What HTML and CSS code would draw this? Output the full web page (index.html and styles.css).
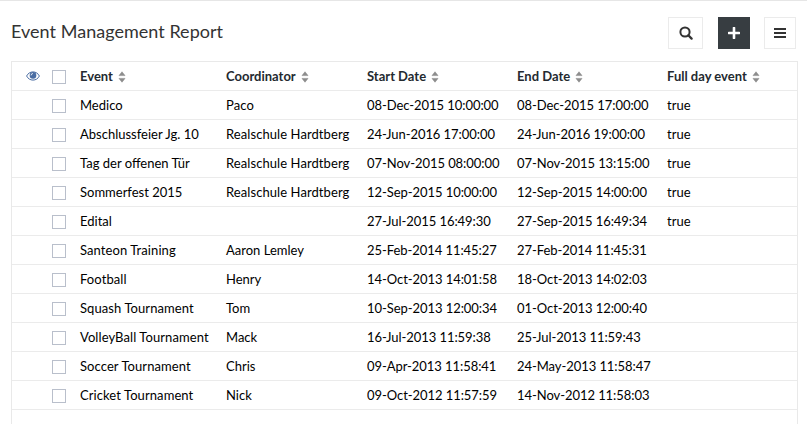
FILE: index.html
```html
<!DOCTYPE html>
<html lang="en">
<head>
<meta charset="utf-8">
<title>Event Management Report</title>
<link rel="stylesheet" href="styles.css">
</head>
<body>
<svg width="0" height="0" class="defs"><symbol id="sort" viewBox="0 0 8 12"><path d="M1 4.6h6L4 .8zM1 7.4h6L4 11.2z" fill="#8d8d8d" stroke="#8d8d8d" stroke-width=".6" stroke-linejoin="round"/></symbol></svg>
<header class="bar">
  <h1>Event Management Report</h1>
  <div class="actions">
    <button class="btn wide" aria-label="Search"><svg width="14" height="14" viewBox="0 0 14 14"><circle cx="6" cy="6" r="4.6" fill="none" stroke="#333" stroke-width="2"/><path d="M9.3 9.3l3.3 3.3" stroke="#333" stroke-width="2.3" stroke-linecap="round"/></svg></button>
    <button class="btn dark" aria-label="Add"><svg width="12" height="12" viewBox="0 0 12 12"><path d="M6 .9v10.2M.9 6h10.2" stroke="#fff" stroke-width="2.6" stroke-linecap="round"/></svg></button>
    <button class="btn" aria-label="Menu"><svg width="12" height="10" viewBox="0 0 12 10"><path d="M0 1h12M0 5h12M0 9h12" stroke="#333" stroke-width="2"/></svg></button>
  </div>
</header>
<main class="table" id="table">
  <div class="row head">
    <span class="eye"><svg width="14" height="10" viewBox="0 0 14 10"><path d="M.6 5C2 2.3 4.3.9 7 .9S12 2.3 13.4 5C12 7.7 9.7 9.1 7 9.1S2 7.7.6 5z" fill="#fff" stroke="#4a6da3" stroke-width="1"/><circle cx="7" cy="4.4" r="3.3" fill="#4a6da3"/><path d="M5.1 4.4A1.9 1.9 0 0 1 7 2.5" fill="none" stroke="#fff" stroke-width=".8"/></svg></span><i class="box"></i>
    <span>Event<svg class="sort"><use href="#sort"/></svg></span>
    <span>Coordinator<svg class="sort"><use href="#sort"/></svg></span>
    <span>Start Date<svg class="sort"><use href="#sort"/></svg></span>
    <span>End Date<svg class="sort"><use href="#sort"/></svg></span>
    <span>Full day event<svg class="sort"><use href="#sort"/></svg></span>
  </div>
  <div class="row"><span></span><i class="box"></i><span>Medico</span><span class="name">Paco</span><span class="date">08-Dec-2015 10:00:00</span><span class="date">08-Dec-2015 17:00:00</span><span>true</span></div>
  <div class="row"><span></span><i class="box"></i><span>Abschlussfeier Jg. 10</span><span class="name">Realschule Hardtberg</span><span class="date">24-Jun-2016 17:00:00</span><span class="date">24-Jun-2016 19:00:00</span><span>true</span></div>
  <div class="row"><span></span><i class="box"></i><span>Tag der offenen Tür</span><span class="name">Realschule Hardtberg</span><span class="date">07-Nov-2015 08:00:00</span><span class="date">07-Nov-2015 13:15:00</span><span>true</span></div>
  <div class="row"><span></span><i class="box"></i><span>Sommerfest 2015</span><span class="name">Realschule Hardtberg</span><span class="date">12-Sep-2015 10:00:00</span><span class="date">12-Sep-2015 14:00:00</span><span>true</span></div>
  <div class="row"><span></span><i class="box"></i><span>Edital</span><span class="name"></span><span class="date">27-Jul-2015 16:49:30</span><span class="date">27-Sep-2015 16:49:34</span><span>true</span></div>
  <div class="row"><span></span><i class="box"></i><span class="name">Santeon Training</span><span>Aaron Lemley</span><span class="date">25-Feb-2014 11:45:27</span><span class="date">27-Feb-2014 11:45:31</span><span></span></div>
  <div class="row"><span></span><i class="box"></i><span class="name">Football</span><span>Henry</span><span class="date">14-Oct-2013 14:01:58</span><span class="date">18-Oct-2013 14:02:03</span><span></span></div>
  <div class="row"><span></span><i class="box"></i><span class="name">Squash Tournament</span><span>Tom</span><span class="date">10-Sep-2013 12:00:34</span><span class="date">01-Oct-2013 12:00:40</span><span></span></div>
  <div class="row"><span></span><i class="box"></i><span class="name">VolleyBall Tournament</span><span>Mack</span><span class="date">16-Jul-2013 11:59:38</span><span class="date">25-Jul-2013 11:59:43</span><span></span></div>
  <div class="row"><span></span><i class="box"></i><span class="name">Soccer Tournament</span><span>Chris</span><span class="date">09-Apr-2013 11:58:41</span><span class="date">24-May-2013 11:58:47</span><span></span></div>
  <div class="row"><span></span><i class="box"></i><span class="name">Cricket Tournament</span><span>Nick</span><span class="date">09-Oct-2012 11:57:59</span><span class="date">14-Nov-2012 11:58:03</span><span></span></div>
</main>
</body>
</html>
```
FILE: styles.css
```css
* { box-sizing: border-box; }
body {
  margin: 0;
  height: 424px;
  overflow: hidden;
  display: flex;
  flex-direction: column;
  background: #fff;
  border-top: 1px solid #e6e6e6;
  font: 13px/28px Lato, sans-serif;
  color: #000;
}
.defs { position: absolute; }
.bar {
  height: 60px;
  flex: none;
  display: flex;
  justify-content: space-between;
  align-items: flex-start;
  padding: 16px 11px 0;
}
h1 {
  margin: 0;
  font-size: 18px;
  font-weight: 400;
  line-height: 29px;
  letter-spacing: .03px;
  color: #333;
}
.actions { display: flex; gap: 14px; }
.btn {
  width: 32px;
  height: 32px;
  padding: 0;
  display: flex;
  align-items: center;
  justify-content: center;
  background: #fff;
  border: 1px solid #ebebeb;
}
.wide { width: 35px; margin-right: 1px; }
.dark { background: #373d41; border-color: #373d41; }
.table {
  flex: 1;
  margin: 0 9px 0 11px;
  border: 1px solid #e9e9e9;
  border-bottom: 0;
}
.row {
  display: grid;
  grid-template-columns: 40px 28px 146px 141px 150px 150px 1fr;
  align-items: center;
  height: 29px;
  border-bottom: 1px solid #ebebeb;
  white-space: nowrap;
}
.head { font-weight: 700; color: #242a30; }
.name { letter-spacing: .08px; }
.date { letter-spacing: -.06px; }
.box {
  width: 14px;
  height: 14px;
  margin-top: 1px;
  border: 1px solid #b9bfcb;
}
.eye { display: flex; padding-left: 14px; }
.sort {
  width: 8px;
  height: 12px;
  margin-left: 5px;
  vertical-align: -2px;
}
```
